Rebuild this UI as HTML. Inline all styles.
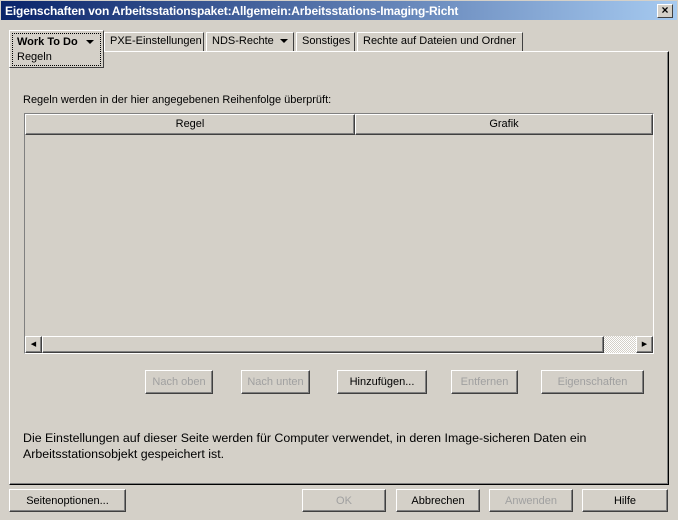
<!DOCTYPE html>
<html><head><style>
*{margin:0;padding:0;box-sizing:border-box}
body{width:678px;height:520px;background:#d4d0c8;font-family:"Liberation Sans",sans-serif;font-size:11px;color:#000;position:relative;overflow:hidden}
.a{position:absolute}
.title{left:0;top:0;width:678px;height:21px;background:linear-gradient(90deg,#0a246a,#a6caf0);border:1px solid #d4d0c8;}
.title span{position:absolute;left:4px;top:3px;color:#fff;font-weight:bold;font-size:12px;letter-spacing:-0.15px}
.x{right:4px;top:3px;width:16px;height:14px;background:#d4d0c8;border:1px solid;border-color:#fff #404040 #404040 #fff;font-size:12px;font-weight:bold;text-align:center;line-height:11px}
.tab{top:32px;height:19px;border:1px solid;border-color:#fff #404040 transparent #fff;border-bottom:none;padding:2px 5px;white-space:nowrap}
.btn{height:24px;border:1px solid;border-color:#fff #404040 #404040 #fff;box-shadow:inset -1px -1px #808080;text-align:center;line-height:22px}
.dis{color:#a0a0a0}
.tri{display:inline-block;width:0;height:0;border-left:4px solid transparent;border-right:4px solid transparent;border-top:4px solid #000;vertical-align:middle;margin-left:6px}
</style></head><body>
<div class="a title"><span>Eigenschaften von Arbeitsstationspaket:Allgemein:Arbeitsstations-Imaging-Richt</span><div class="a x">×</div></div>
<div class="a" style="left:9px;top:51px;width:660px;height:434px;border:1px solid;border-color:#fff #000 #000 #fff;box-shadow:inset -1px -1px #808080"></div>
<div class="a tab" style="left:104px;width:100px">PXE-Einstellungen</div>
<div class="a tab" style="left:206px;width:88px">NDS-Rechte<span class="tri"></span></div>
<div class="a tab" style="left:296px;width:59px">Sonstiges</div>
<div class="a tab" style="left:357px;width:166px">Rechte auf Dateien und Ordner</div>
<div class="a" style="left:9px;top:30px;width:95px;height:38px;border:1px solid;border-color:#fff #404040 #404040 #fff;background:#d4d0c8"></div>
<div class="a" style="left:12px;top:33px;width:89px;height:33px;border:1px dotted #000;padding:1px 4px;line-height:15px"><b style="font-size:11px">Work To Do</b><span class="tri" style="margin-left:8px"></span><br>Regeln</div>
<div class="a" style="left:23px;top:94px">Regeln werden in der hier angegebenen Reihenfolge überprüft:</div>
<div class="a" style="left:24px;top:113px;width:630px;height:241px;border:1px solid;border-color:#808080 #fff #fff #808080"></div>
<div class="a btn" style="left:25px;top:114px;width:330px;height:21px;line-height:19px">Regel</div>
<div class="a btn" style="left:355px;top:114px;width:298px;height:21px;line-height:19px">Grafik</div>
<div class="a" style="left:25px;top:336px;width:628px;height:17px;background:#d4d0c8">
<div class="a btn" style="left:0;top:0;width:17px;height:17px;font-size:7px;line-height:15px">◀</div>
<div class="a btn" style="left:17px;top:0;width:562px;height:17px"></div>
<div class="a" style="left:579px;top:0;width:32px;height:17px;background:repeating-conic-gradient(#fff 0 25%,#d4d0c8 0 50%) 0 0/2px 2px"></div>
<div class="a btn" style="left:611px;top:0;width:17px;height:17px;font-size:7px;line-height:15px">▶</div>
</div>
<div class="a btn dis" style="left:145px;top:370px;width:68px">Nach oben</div>
<div class="a btn dis" style="left:241px;top:370px;width:69px">Nach unten</div>
<div class="a btn" style="left:337px;top:370px;width:90px">Hinzufügen...</div>
<div class="a btn dis" style="left:451px;top:370px;width:67px">Entfernen</div>
<div class="a btn dis" style="left:541px;top:370px;width:103px">Eigenschaften</div>
<div class="a" style="left:23px;top:430px;line-height:16px;width:645px;font-size:12.4px">Die Einstellungen auf dieser Seite werden für Computer verwendet, in deren Image-sicheren Daten ein<br>Arbeitsstationsobjekt gespeichert ist.</div>
<div class="a btn" style="left:9px;top:489px;width:117px;height:23px">Seitenoptionen...</div>
<div class="a btn dis" style="left:302px;top:489px;width:84px;height:23px">OK</div>
<div class="a btn" style="left:396px;top:489px;width:84px;height:23px">Abbrechen</div>
<div class="a btn dis" style="left:489px;top:489px;width:84px;height:23px">Anwenden</div>
<div class="a btn" style="left:582px;top:489px;width:86px;height:23px">Hilfe</div>
</body></html>
